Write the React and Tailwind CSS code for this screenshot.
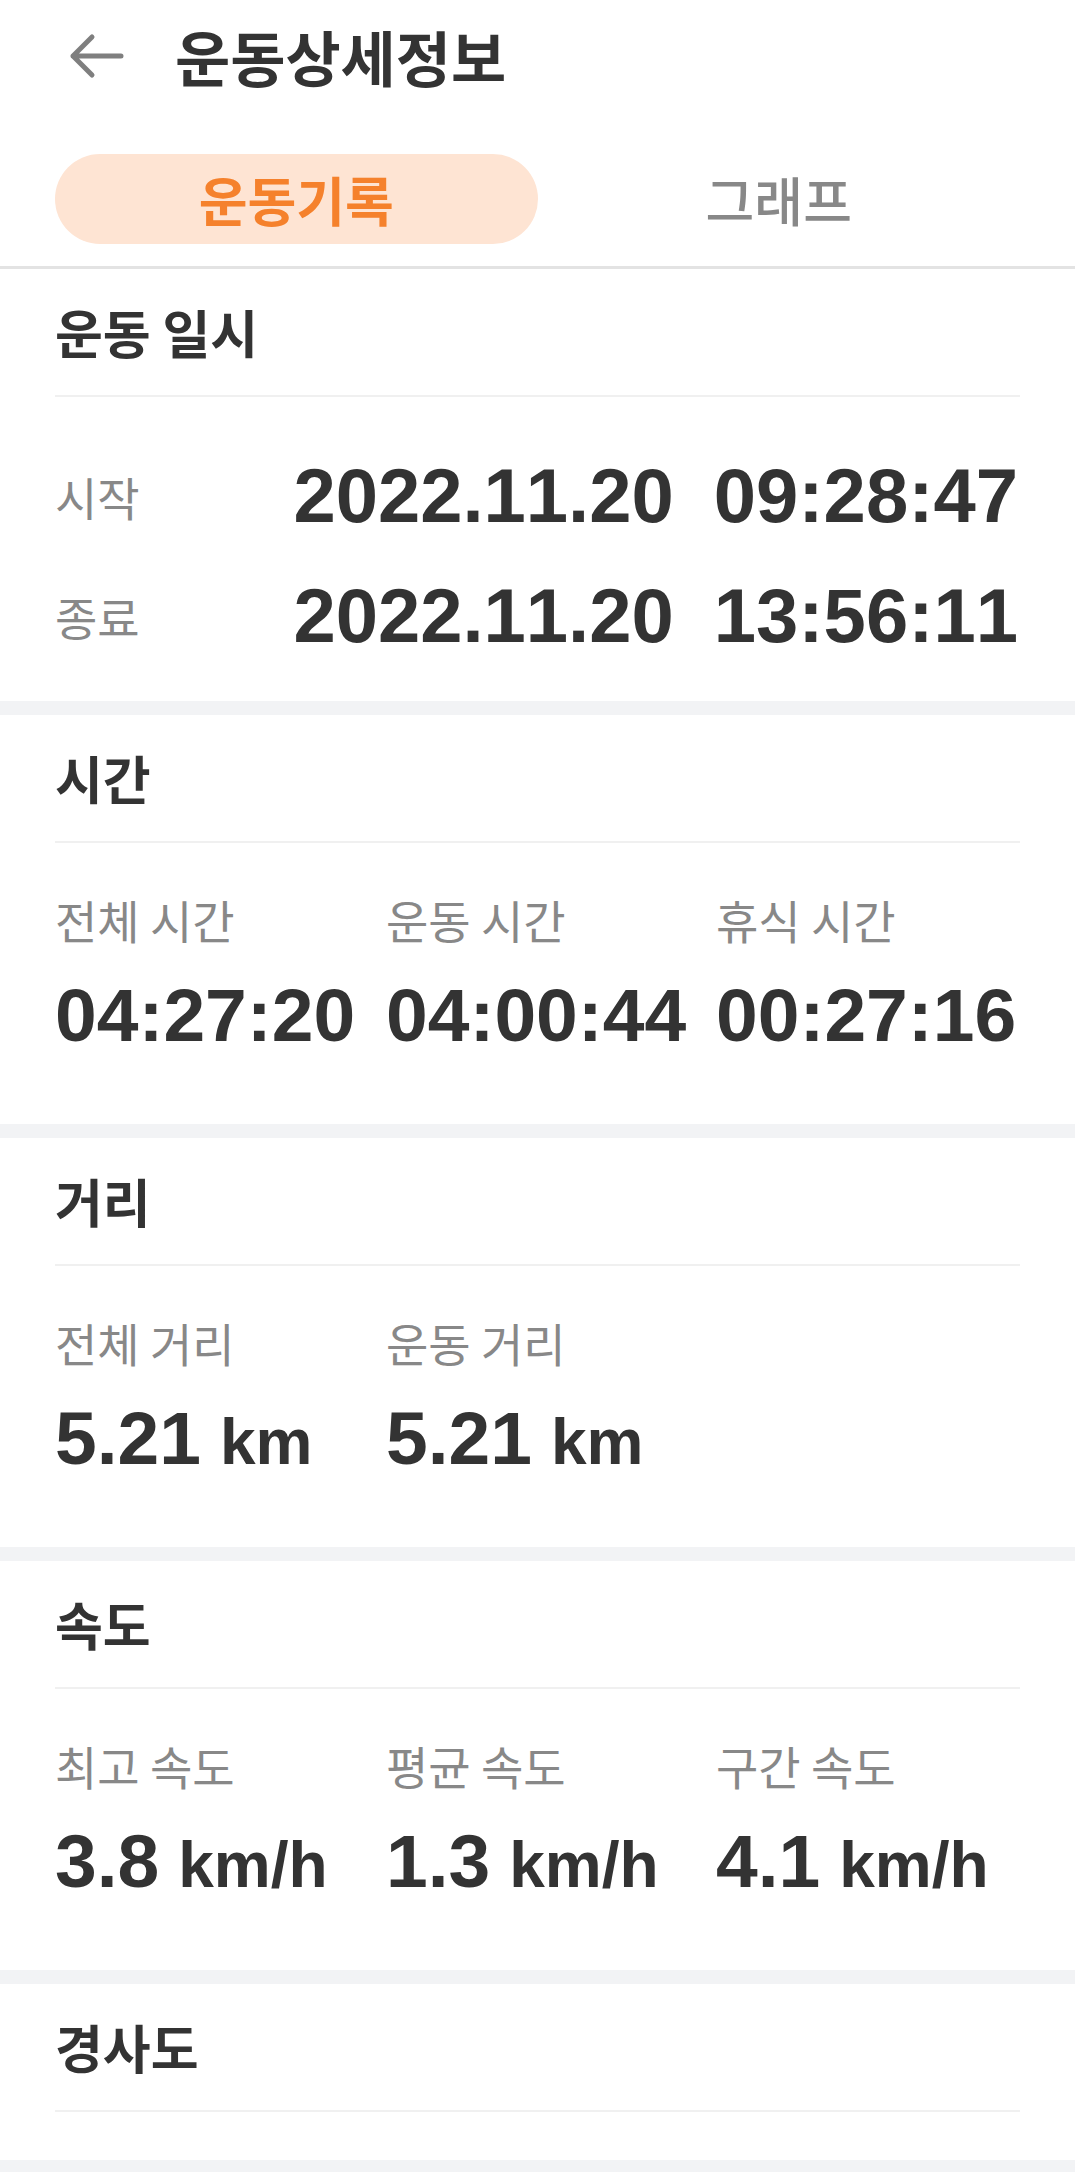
import React from 'react';

const sections = [
  {
    title: '시간',
    items: [
      { label: '전체 시간', value: '04:27:20' },
      { label: '운동 시간', value: '04:00:44' },
      { label: '휴식 시간', value: '00:27:16' },
    ],
  },
  {
    title: '거리',
    items: [
      { label: '전체 거리', value: '5.21', unit: 'km' },
      { label: '운동 거리', value: '5.21', unit: 'km' },
    ],
  },
  {
    title: '속도',
    items: [
      { label: '최고 속도', value: '3.8', unit: 'km/h' },
      { label: '평균 속도', value: '1.3', unit: 'km/h' },
      { label: '구간 속도', value: '4.1', unit: 'km/h' },
    ],
  },
];

const kr = "font-['Noto_Sans_CJK_KR',sans-serif]";
const num = "font-['Liberation_Sans',Arial,sans-serif] [font-kerning:none]";

function SectionHeader({ title }) {
  return (
    <>
      <div className="h-[126px] flex items-center px-[55px]">
        <h3 className={`${kr} text-[52px] leading-none font-bold text-[#333333]`}>{title}</h3>
      </div>
      <div className="mx-[55px] h-[2px] bg-[#f0f0f0]" />
    </>
  );
}

function Band() {
  return <div className="h-[14px] bg-[#f2f3f5]" />;
}

export default function App() {
  return (
    <div className={`w-[1075px] min-h-[2172px] bg-white ${kr}`}>
      {/* Top bar */}
      <div className="h-[112px] flex items-center">
        <svg className="ml-[67px]" width="60" height="48" viewBox="0 0 60 48" fill="none">
          <path d="M6 24H54M25 5L6 24L25 43" stroke="#7f7f7f" strokeWidth="5" strokeLinecap="round" strokeLinejoin="round" />
        </svg>
        <h1 className="ml-[48px] text-[60px] leading-none font-bold text-[#333333]">운동상세정보</h1>
      </div>

      {/* Tabs */}
      <div className="grid grid-cols-2 px-[55px] pt-[42px] pb-[22px] border-b-[3px] border-[#e3e3e3]">
        <button className="h-[90px] rounded-full bg-[#fee4d3] text-[53px] leading-none font-bold text-[#f5812c]">
          운동기록
        </button>
        <button className="h-[90px] rounded-full text-[53px] leading-none font-medium text-[#888888]">
          그래프
        </button>
      </div>

      {/* 운동 일시 */}
      <SectionHeader title="운동 일시" />
      <div className="px-[55px] pt-[39px] pb-[25px]">
        {[
          ['시작', '2022.11.20', '09:28:47'],
          ['종료', '2022.11.20', '13:56:11'],
        ].map(([label, date, time]) => (
          <div key={label} className="h-[120px] flex items-center justify-between">
            <span className="text-[46px] leading-none text-[#888888]">{label}</span>
            <span className={`${num} flex gap-[40px] text-[76px] leading-none font-bold text-[#333333] mr-[2px]`}>
              <span>{date}</span>
              <span>{time}</span>
            </span>
          </div>
        ))}
      </div>

      {sections.map((s) => (
        <div key={s.title}>
          <Band />
          <SectionHeader title={s.title} />
          <div className="grid grid-cols-[331px_330px_1fr] px-[55px] pt-[53px] pb-[71px]">
            {s.items.map((it) => (
              <div key={it.label} className="flex flex-col">
                <span className="h-[46px] text-[46px] leading-none text-[#888888] whitespace-nowrap">{it.label}</span>
                <span className={`${num} mt-[36px] h-[75px] flex items-baseline text-[75px] leading-none font-bold text-[#333333] whitespace-nowrap`}>
                  {it.value}
                  {it.unit && <span className="ml-[19px] text-[64px]">{it.unit}</span>}
                </span>
              </div>
            ))}
          </div>
        </div>
      ))}

      {/* 경사도 */}
      <Band />
      <SectionHeader title="경사도" />
      <div className="h-[48px]" />
      <div className="h-[40px] bg-[#f2f3f5]" />
    </div>
  );
}
